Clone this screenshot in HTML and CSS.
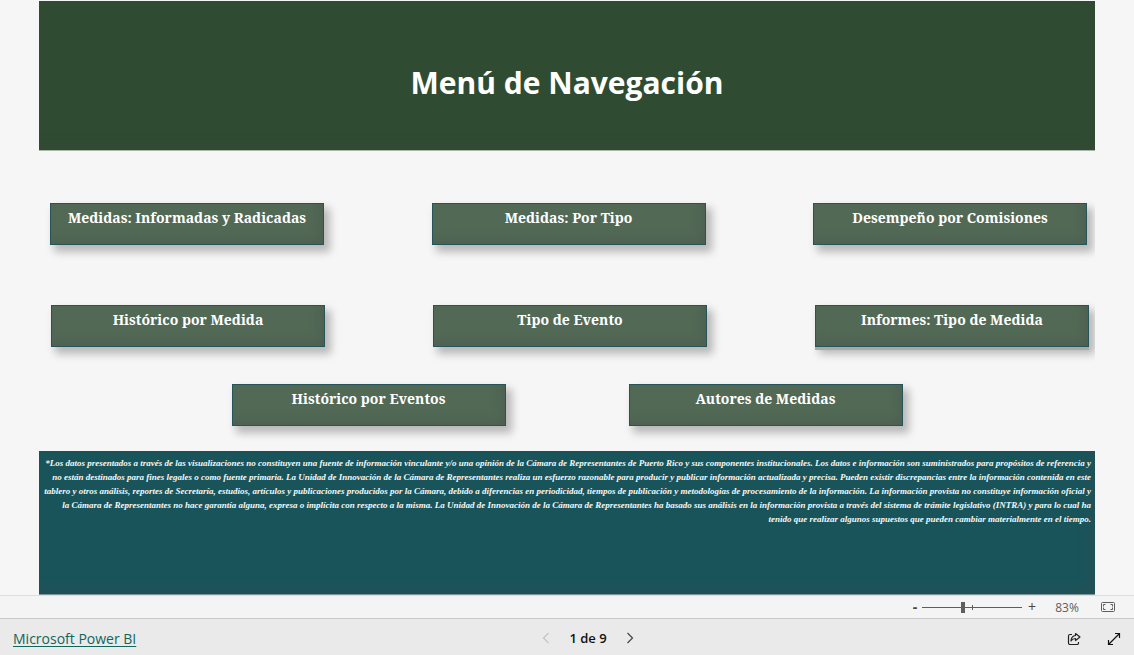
FILE: index.html
```html
<!DOCTYPE html>
<html lang="es">
<head>
<meta charset="utf-8">
<title>Menú de Navegación</title>
<link rel="stylesheet" href="styles.css">
</head>
<body>
<main class="report">
  <header class="banner"><h1 class="banner-title">Menú de Navegación</h1></header>
  <nav class="menu">
    <div class="menu-row">
      <button class="tile" type="button">Medidas: Informadas y Radicadas</button>
      <button class="tile" type="button">Medidas: Por Tipo</button>
      <button class="tile" type="button">Desempeño por Comisiones</button>
    </div>
    <div class="menu-row menu-row-wide">
      <button class="tile" type="button">Histórico por Medida</button>
      <button class="tile" type="button">Tipo de Evento</button>
      <button class="tile tile-edge" type="button">Informes: Tipo de Medida</button>
    </div>
    <div class="menu-row menu-row-center">
      <button class="tile" type="button">Histórico por Eventos</button>
      <button class="tile" type="button">Autores de Medidas</button>
    </div>
  </nav>
  <p class="notice">
    <span class="line">*Los datos presentados a través de las visualizaciones no constituyen una fuente de información vinculante y/o una opinión de la Cámara de Representantes de Puerto Rico y sus componentes institucionales. Los datos e información son suministrados para propósitos de referencia y</span>
    <span class="line">no están destinados para fines legales o como fuente primaria. La Unidad de Innovación de la Cámara de Representantes realiza un esfuerzo razonable para producir y publicar información actualizada y precisa. Pueden existir discrepancias entre la información contenida en este</span>
    <span class="line">tablero y otros análisis, reportes de Secretaría, estudios, artículos y publicaciones producidos por la Cámara, debido a diferencias en periodicidad, tiempos de publicación y metodologías de procesamiento de la información. La información provista no constituye información oficial y</span>
    <span class="line">la Cámara de Representantes no hace garantía alguna, expresa o implícita con respecto a la misma. La Unidad de Innovación de la Cámara de Representantes ha basado sus análisis en la información provista a través del sistema de trámite legislativo (INTRA) y para lo cual ha</span>
    <span class="line">tenido que realizar algunos supuestos que pueden cambiar materialmente en el tiempo.</span>
  </p>
</main>
<div class="zoombar">
  <button class="zoom-step zoom-out" type="button" aria-label="Alejar">-</button>
  <div class="zoom-track">
    <input class="zoom-range" type="range" min="0" max="100" value="41" aria-label="Zoom">
    <span class="zoom-tick"></span>
  </div>
  <button class="zoom-step" type="button" aria-label="Acercar">+</button>
  <span class="zoom-value">83%</span>
  <button class="icon-btn fit" type="button" aria-label="Ajustar a la página">
    <svg width="14" height="10" viewBox="0 0 14 10" fill="none" stroke="#605e5c"><rect x=".5" y=".5" width="13" height="9" rx="1"/><path d="M4.5 2.5h-2v2M2.500 5.500v2h2M9.500 2.500h2v2M11.500 5.500v2h-2"/></svg>
  </button>
</div>
<footer class="statusbar">
  <div class="side"><a class="brand" href="#">Microsoft Power BI</a></div>
  <div class="pager">
    <button class="icon-btn" type="button" aria-label="Anterior" disabled>
      <svg width="8" height="12" viewBox="0 0 8 12" fill="none" stroke="#c4c4c4" stroke-width="1.200"><path d="M6.500 1 1.500 6l5 5"/></svg>
    </button>
    <span class="page">1 de 9</span>
    <button class="icon-btn" type="button" aria-label="Siguiente">
      <svg width="8" height="12" viewBox="0 0 8 12" fill="none" stroke="#444" stroke-width="1.200"><path d="m1.500 1 5 5-5 5"/></svg>
    </button>
  </div>
  <div class="side side-end">
    <button class="icon-btn" type="button" aria-label="Compartir">
      <svg width="14" height="14" viewBox="0 0 14 14" fill="none" stroke="#222" stroke-width="1.200" stroke-linejoin="round"><path d="M5 2.500H3a1.500 1.500 0 0 0-1.500 1.500v7A1.500 1.500 0 0 0 3 12.500h7a1.500 1.500 0 0 0 1.500-1.500v-1"/><path d="M8.500 1.500 13 5 8.500 8.500v-2C6.500 6.500 5 7.500 4 9c.2-3 1.800-5.200 4.500-5.500z"/></svg>
    </button>
    <button class="icon-btn" type="button" aria-label="Pantalla completa">
      <svg width="14" height="14" viewBox="0 0 14 14" fill="none" stroke="#111" stroke-width="1.200"><path d="M1.500 12.500l11-11M8 1.500h4.500V6M1.500 8v4.500H6"/></svg>
    </button>
  </div>
</footer>
</body>
</html>
```
FILE: styles.css
```css
* { box-sizing: border-box; }
body {
  margin: 0;
  min-height: 100vh;
  display: flex;
  flex-direction: column;
  background: #f6f6f6;
  font-family: "Open Sans", "Noto Sans", sans-serif;
}
button { font: inherit; cursor: pointer; }
.report {
  flex: 1;
  display: flex;
  flex-direction: column;
  margin: 0 39px;
  padding-top: 1px;
  overflow-x: clip;
}
.banner {
  height: 150px;
  display: flex;
  align-items: center;
  justify-content: center;
  padding-bottom: 1px;
  background: #2f4c33;
  border-bottom: 1px solid #a9b5a9;
  box-shadow: inset -8px -8px 12px -6px #344934;
}
.banner-title {
  margin: 0;
  padding-top: 16px;
  font-size: 30px;
  line-height: 32px;
  font-weight: 700;
  color: #fff;
}
.menu { padding: 52px 0 25px; }
.menu-row {
  display: flex;
  justify-content: space-between;
  padding: 0 8px 0 11px;
}
.menu-row-wide {
  margin-top: 60px;
  padding: 0 6px 0 12px;
}
.menu-row-center {
  margin-top: 37px;
  padding: 0;
  justify-content: center;
  gap: 123px;
}
.tile {
  width: 274px;
  height: 42px;
  padding: 3px 0 15px;
  border: 1px solid #25545a;
  background: #526956;
  box-shadow: inset -6px -6px 12px -4px #4d5d50, 5px 6px 8px 1px rgba(0, 0, 0, 0.25);
  color: #fff;
  font-family: "Noto Serif", "Liberation Serif", serif;
  font-size: 14px;
  line-height: 22px;
  font-weight: 700;
  white-space: nowrap;
}
.tile-edge { box-shadow: inset -6px -6px 12px -4px #4d5d50, 0 3px 0 #a8a8a8, 5px 6px 8px 1px rgba(0, 0, 0, 0.25); }
.notice {
  flex: 1;
  margin: 0;
  padding: 5px 4px;
  background: #1a545b;
  border-bottom: 1px solid #7d9699;
  box-shadow: inset -8px -8px 14px -6px #275055;
  color: #f4f8f8;
  font-family: "Liberation Serif", serif;
  font-size: 9px;
  line-height: 14px;
  font-style: italic;
  font-weight: 700;
  text-align: right;
}
.line { display: block; white-space: nowrap; }
.zoombar {
  height: 23px;
  display: flex;
  align-items: center;
  justify-content: flex-end;
  padding-right: 19px;
  background: #f4f4f4;
  border-top: 1px solid #dedede;
  color: #605e5c;
  font-size: 12px;
}
.zoom-step {
  width: 20px;
  padding: 0;
  border: 0;
  background: none;
  color: #444;
  font-size: 14px;
  line-height: 20px;
}
.zoom-out { width: 14px; font-weight: 700; }
.zoom-track {
  position: relative;
  width: 100px;
  height: 12px;
  display: flex;
}
.zoom-range {
  appearance: none;
  width: 100%;
  height: 12px;
  margin: 0;
  background: linear-gradient(#605e5c, #605e5c) center / 100% 1px no-repeat;
}
.zoom-range::-webkit-slider-thumb {
  appearance: none;
  width: 4px;
  height: 11px;
  background: #605e5c;
}
.zoom-tick {
  position: absolute;
  left: 50%;
  top: 4px;
  width: 1px;
  height: 5px;
  background: #605e5c;
}
.zoom-value { width: 50px; text-align: center; }
.icon-btn {
  display: flex;
  padding: 0;
  border: 0;
  background: none;
}
.fit { margin-left: 9px; }
.statusbar {
  height: 37px;
  display: flex;
  align-items: center;
  padding: 0 13px;
  background: #eaeaea;
  border-top: 1px solid #c8c8c8;
  font-size: 14px;
}
.side { flex: 1; display: flex; padding-top: 3px; }
.side-end { justify-content: flex-end; gap: 26px; }
.brand { color: #0f665c; text-underline-offset: 2px; }
.pager {
  display: flex;
  align-items: center;
  gap: 19px;
  padding: 2px 0 0 42px;
}
.page { font-size: 13px; font-weight: 600; color: #111; }
```
